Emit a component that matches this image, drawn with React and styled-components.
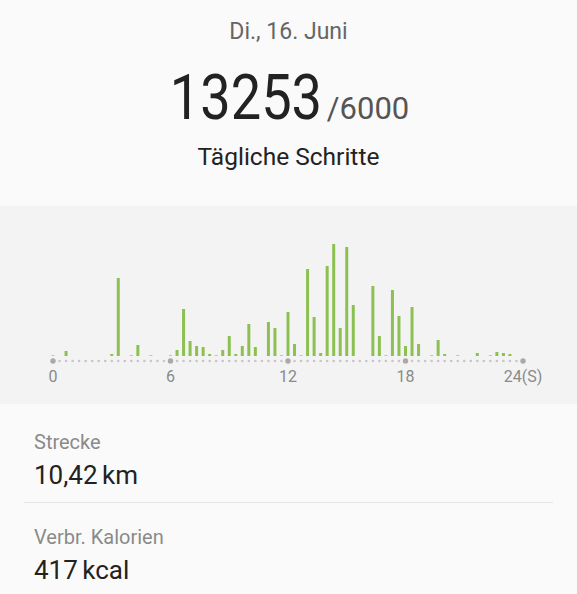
import React from 'react';
import styled, {createGlobalStyle} from 'styled-components';

const GlobalStyle = createGlobalStyle`
    body {
        margin: 0;
        background: #fafafa;
        font-family: Roboto, "Noto Sans", Arial, sans-serif;
    }
`

const Page = styled.div`
    width: 577px;
    min-height: 594px;
    background: #fafafa;
    display: flex;
    flex-direction: column;
`
const Header = styled.div`
    display: flex;
    flex-direction: column;
    align-items: center;
    padding-top: 17px;
`
const DateLine = styled.div`
    font-size: 23px;
    line-height: 30px;
    color: #666;
`
const Count = styled.div`
    margin-top: 16px;
    height: 70px;
    line-height: 70px;
    font-size: 63px;
    color: #222;
    transform: translateX(1px);
`
const Steps = styled.span`
    display: inline-block;
    transform: scaleX(0.86);
    transform-origin: right center;
    margin-left: -25px;
    margin-right: 5px;
`
const Goal = styled.span`
    font-size: 31px;
    line-height: 1;
    color: #555;
`
const Caption = styled.div`
    margin-top: 9px;
    font-size: 24.5px;
    line-height: 30px;
    color: #222;
`
const ChartPanel = styled.div`
    margin-top: 34px;
    height: 198px;
    background: #f3f3f3;
`
const Stats = styled.div`
    padding-top: 26px;
    display: flex;
    flex-direction: column;
`
const Stat = styled.div`
    padding: 0 34px;
    display: flex;
    flex-direction: column;
    gap: 5px;
`
const StatLabel = styled.div`
    font-size: 20px;
    line-height: 24px;
    color: #8a8a8a;
`
const StatValue = styled.div`
    font-size: 26px;
    line-height: 32px;
    color: #222;
    word-spacing: -2px;
`
const Divider = styled.div`
    height: 1px;
    margin: 11px 24px 22px;
    background: #e5e5e5;
`

// [20-min slot, bar height in px]
const BARS = [
    [0, 1], [2, 5], [9, 2], [10, 78], [12, 1], [13, 11], [15, 1], [18, 1],
    [19, 6], [20, 47], [21, 15], [22, 10], [23, 9], [24, 2], [25, 1], [26, 6],
    [27, 20], [28, 2], [29, 10], [30, 32], [31, 9], [33, 34], [34, 28], [35, 1],
    [36, 44], [37, 12], [38, 1], [39, 87], [40, 39], [41, 3], [42, 90], [43, 112],
    [44, 28], [45, 109], [46, 51], [49, 70], [50, 20], [51, 1], [52, 66], [53, 40],
    [54, 10], [55, 49], [56, 12], [58, 1], [59, 16], [60, 2], [62, 1], [65, 3],
    [67, 1], [68, 4], [69, 3], [70, 2],
];

const X0 = 53;
const STEP = 470 / 72;
const BASE = 150;

const Chart = () => {
    const dots = [];
    for (let i = 0; i <= 72; i++) {
        const big = i % 18 === 0;
        dots.push(
            <circle key={i} cx={X0 + i * STEP} cy={155} r={big ? 2.7 : 1.3} fill={big ? '#a9a9a9' : '#c6c6c6'} />
        );
    }
    const labels = ['0', '6', '12', '18', '24(S)'];
    return (
        <svg width="577" height="198">
            {BARS.map(([i, h]) => (
                <rect
                    key={i}
                    x={X0 + i * STEP - 1.5}
                    y={BASE - h}
                    width="3"
                    height={h}
                    fill={h <= 1 ? '#b9cca4' : '#8cc152'}
                />
            ))}
            {dots}
            {labels.map((t, k) => (
                <text
                    key={t}
                    x={X0 + k * 18 * STEP}
                    y={176}
                    textAnchor="middle"
                    fontSize="16"
                    fill="#8a8a8a"
                    fontFamily="Roboto, sans-serif"
                >
                    {t}
                </text>
            ))}
        </svg>
    );
};

const App = () => {
    return (
        <Page>
            <GlobalStyle />
            <Header>
                <DateLine>Di., 16. Juni</DateLine>
                <Count>
                    <Steps>13253</Steps>
                    <Goal>/6000</Goal>
                </Count>
                <Caption>Tägliche Schritte</Caption>
            </Header>
            <ChartPanel>
                <Chart />
            </ChartPanel>
            <Stats>
                <Stat>
                    <StatLabel>Strecke</StatLabel>
                    <StatValue>10,42 km</StatValue>
                </Stat>
                <Divider />
                <Stat>
                    <StatLabel>Verbr. Kalorien</StatLabel>
                    <StatValue>417 kcal</StatValue>
                </Stat>
            </Stats>
        </Page>
    );
};

export default App;
